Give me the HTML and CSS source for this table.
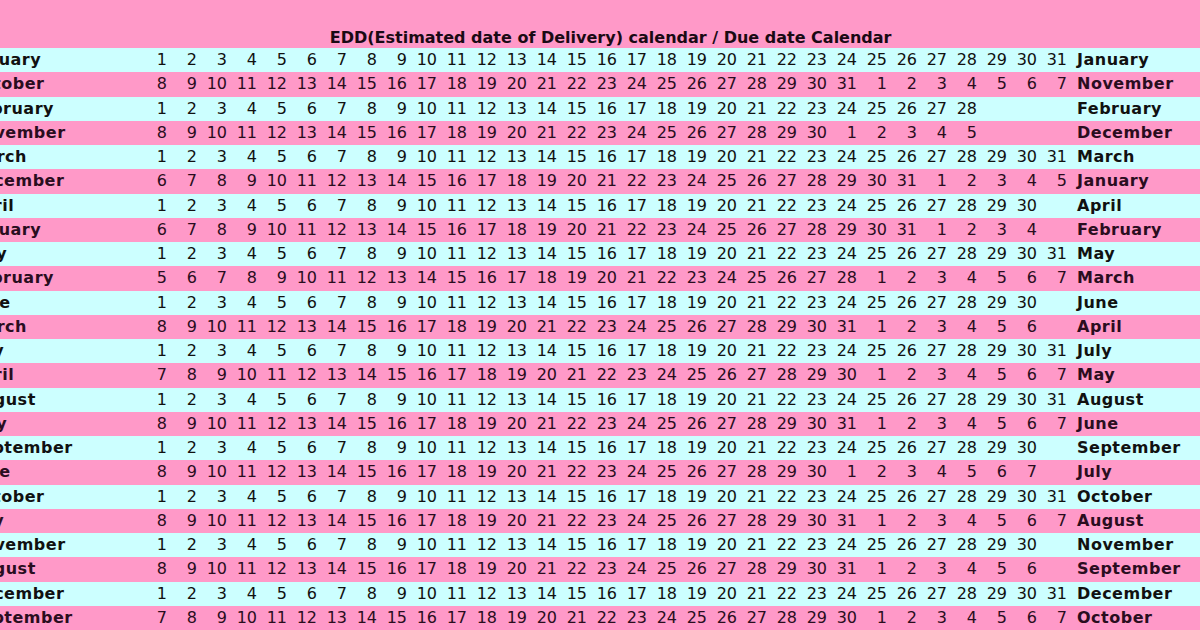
FILE: index.html
```html
<!DOCTYPE html>
<html>
<head>
<meta charset="utf-8">
<title>EDD calendar</title>
<link rel="stylesheet" href="styles.css">
</head>
<body>
<table class="edd">
<colgroup><col class="cm"><col span="31" class="cn"><col class="cr"></colgroup>
<tr class="head"><td colspan="33" class="title">EDD(Estimated date of Delivery) calendar / Due date Calendar</td></tr>
<tr class="c"><td class="m">January</td><td>1</td><td>2</td><td>3</td><td>4</td><td>5</td><td>6</td><td>7</td><td>8</td><td>9</td><td>10</td><td>11</td><td>12</td><td>13</td><td>14</td><td>15</td><td>16</td><td>17</td><td>18</td><td>19</td><td>20</td><td>21</td><td>22</td><td>23</td><td>24</td><td>25</td><td>26</td><td>27</td><td>28</td><td>29</td><td>30</td><td>31</td><td class="r">January</td></tr>
<tr class="p"><td class="m">October</td><td>8</td><td>9</td><td>10</td><td>11</td><td>12</td><td>13</td><td>14</td><td>15</td><td>16</td><td>17</td><td>18</td><td>19</td><td>20</td><td>21</td><td>22</td><td>23</td><td>24</td><td>25</td><td>26</td><td>27</td><td>28</td><td>29</td><td>30</td><td>31</td><td>1</td><td>2</td><td>3</td><td>4</td><td>5</td><td>6</td><td>7</td><td class="r">November</td></tr>
<tr class="c"><td class="m">February</td><td>1</td><td>2</td><td>3</td><td>4</td><td>5</td><td>6</td><td>7</td><td>8</td><td>9</td><td>10</td><td>11</td><td>12</td><td>13</td><td>14</td><td>15</td><td>16</td><td>17</td><td>18</td><td>19</td><td>20</td><td>21</td><td>22</td><td>23</td><td>24</td><td>25</td><td>26</td><td>27</td><td>28</td><td></td><td></td><td></td><td class="r">February</td></tr>
<tr class="p"><td class="m">November</td><td>8</td><td>9</td><td>10</td><td>11</td><td>12</td><td>13</td><td>14</td><td>15</td><td>16</td><td>17</td><td>18</td><td>19</td><td>20</td><td>21</td><td>22</td><td>23</td><td>24</td><td>25</td><td>26</td><td>27</td><td>28</td><td>29</td><td>30</td><td>1</td><td>2</td><td>3</td><td>4</td><td>5</td><td></td><td></td><td></td><td class="r">December</td></tr>
<tr class="c"><td class="m">March</td><td>1</td><td>2</td><td>3</td><td>4</td><td>5</td><td>6</td><td>7</td><td>8</td><td>9</td><td>10</td><td>11</td><td>12</td><td>13</td><td>14</td><td>15</td><td>16</td><td>17</td><td>18</td><td>19</td><td>20</td><td>21</td><td>22</td><td>23</td><td>24</td><td>25</td><td>26</td><td>27</td><td>28</td><td>29</td><td>30</td><td>31</td><td class="r">March</td></tr>
<tr class="p"><td class="m">December</td><td>6</td><td>7</td><td>8</td><td>9</td><td>10</td><td>11</td><td>12</td><td>13</td><td>14</td><td>15</td><td>16</td><td>17</td><td>18</td><td>19</td><td>20</td><td>21</td><td>22</td><td>23</td><td>24</td><td>25</td><td>26</td><td>27</td><td>28</td><td>29</td><td>30</td><td>31</td><td>1</td><td>2</td><td>3</td><td>4</td><td>5</td><td class="r">January</td></tr>
<tr class="c"><td class="m">April</td><td>1</td><td>2</td><td>3</td><td>4</td><td>5</td><td>6</td><td>7</td><td>8</td><td>9</td><td>10</td><td>11</td><td>12</td><td>13</td><td>14</td><td>15</td><td>16</td><td>17</td><td>18</td><td>19</td><td>20</td><td>21</td><td>22</td><td>23</td><td>24</td><td>25</td><td>26</td><td>27</td><td>28</td><td>29</td><td>30</td><td></td><td class="r">April</td></tr>
<tr class="p"><td class="m">January</td><td>6</td><td>7</td><td>8</td><td>9</td><td>10</td><td>11</td><td>12</td><td>13</td><td>14</td><td>15</td><td>16</td><td>17</td><td>18</td><td>19</td><td>20</td><td>21</td><td>22</td><td>23</td><td>24</td><td>25</td><td>26</td><td>27</td><td>28</td><td>29</td><td>30</td><td>31</td><td>1</td><td>2</td><td>3</td><td>4</td><td></td><td class="r">February</td></tr>
<tr class="c"><td class="m">May</td><td>1</td><td>2</td><td>3</td><td>4</td><td>5</td><td>6</td><td>7</td><td>8</td><td>9</td><td>10</td><td>11</td><td>12</td><td>13</td><td>14</td><td>15</td><td>16</td><td>17</td><td>18</td><td>19</td><td>20</td><td>21</td><td>22</td><td>23</td><td>24</td><td>25</td><td>26</td><td>27</td><td>28</td><td>29</td><td>30</td><td>31</td><td class="r">May</td></tr>
<tr class="p"><td class="m">February</td><td>5</td><td>6</td><td>7</td><td>8</td><td>9</td><td>10</td><td>11</td><td>12</td><td>13</td><td>14</td><td>15</td><td>16</td><td>17</td><td>18</td><td>19</td><td>20</td><td>21</td><td>22</td><td>23</td><td>24</td><td>25</td><td>26</td><td>27</td><td>28</td><td>1</td><td>2</td><td>3</td><td>4</td><td>5</td><td>6</td><td>7</td><td class="r">March</td></tr>
<tr class="c"><td class="m">June</td><td>1</td><td>2</td><td>3</td><td>4</td><td>5</td><td>6</td><td>7</td><td>8</td><td>9</td><td>10</td><td>11</td><td>12</td><td>13</td><td>14</td><td>15</td><td>16</td><td>17</td><td>18</td><td>19</td><td>20</td><td>21</td><td>22</td><td>23</td><td>24</td><td>25</td><td>26</td><td>27</td><td>28</td><td>29</td><td>30</td><td></td><td class="r">June</td></tr>
<tr class="p"><td class="m">March</td><td>8</td><td>9</td><td>10</td><td>11</td><td>12</td><td>13</td><td>14</td><td>15</td><td>16</td><td>17</td><td>18</td><td>19</td><td>20</td><td>21</td><td>22</td><td>23</td><td>24</td><td>25</td><td>26</td><td>27</td><td>28</td><td>29</td><td>30</td><td>31</td><td>1</td><td>2</td><td>3</td><td>4</td><td>5</td><td>6</td><td></td><td class="r">April</td></tr>
<tr class="c"><td class="m">July</td><td>1</td><td>2</td><td>3</td><td>4</td><td>5</td><td>6</td><td>7</td><td>8</td><td>9</td><td>10</td><td>11</td><td>12</td><td>13</td><td>14</td><td>15</td><td>16</td><td>17</td><td>18</td><td>19</td><td>20</td><td>21</td><td>22</td><td>23</td><td>24</td><td>25</td><td>26</td><td>27</td><td>28</td><td>29</td><td>30</td><td>31</td><td class="r">July</td></tr>
<tr class="p"><td class="m">April</td><td>7</td><td>8</td><td>9</td><td>10</td><td>11</td><td>12</td><td>13</td><td>14</td><td>15</td><td>16</td><td>17</td><td>18</td><td>19</td><td>20</td><td>21</td><td>22</td><td>23</td><td>24</td><td>25</td><td>26</td><td>27</td><td>28</td><td>29</td><td>30</td><td>1</td><td>2</td><td>3</td><td>4</td><td>5</td><td>6</td><td>7</td><td class="r">May</td></tr>
<tr class="c"><td class="m">August</td><td>1</td><td>2</td><td>3</td><td>4</td><td>5</td><td>6</td><td>7</td><td>8</td><td>9</td><td>10</td><td>11</td><td>12</td><td>13</td><td>14</td><td>15</td><td>16</td><td>17</td><td>18</td><td>19</td><td>20</td><td>21</td><td>22</td><td>23</td><td>24</td><td>25</td><td>26</td><td>27</td><td>28</td><td>29</td><td>30</td><td>31</td><td class="r">August</td></tr>
<tr class="p"><td class="m">May</td><td>8</td><td>9</td><td>10</td><td>11</td><td>12</td><td>13</td><td>14</td><td>15</td><td>16</td><td>17</td><td>18</td><td>19</td><td>20</td><td>21</td><td>22</td><td>23</td><td>24</td><td>25</td><td>26</td><td>27</td><td>28</td><td>29</td><td>30</td><td>31</td><td>1</td><td>2</td><td>3</td><td>4</td><td>5</td><td>6</td><td>7</td><td class="r">June</td></tr>
<tr class="c"><td class="m">September</td><td>1</td><td>2</td><td>3</td><td>4</td><td>5</td><td>6</td><td>7</td><td>8</td><td>9</td><td>10</td><td>11</td><td>12</td><td>13</td><td>14</td><td>15</td><td>16</td><td>17</td><td>18</td><td>19</td><td>20</td><td>21</td><td>22</td><td>23</td><td>24</td><td>25</td><td>26</td><td>27</td><td>28</td><td>29</td><td>30</td><td></td><td class="r">September</td></tr>
<tr class="p"><td class="m">June</td><td>8</td><td>9</td><td>10</td><td>11</td><td>12</td><td>13</td><td>14</td><td>15</td><td>16</td><td>17</td><td>18</td><td>19</td><td>20</td><td>21</td><td>22</td><td>23</td><td>24</td><td>25</td><td>26</td><td>27</td><td>28</td><td>29</td><td>30</td><td>1</td><td>2</td><td>3</td><td>4</td><td>5</td><td>6</td><td>7</td><td></td><td class="r">July</td></tr>
<tr class="c"><td class="m">October</td><td>1</td><td>2</td><td>3</td><td>4</td><td>5</td><td>6</td><td>7</td><td>8</td><td>9</td><td>10</td><td>11</td><td>12</td><td>13</td><td>14</td><td>15</td><td>16</td><td>17</td><td>18</td><td>19</td><td>20</td><td>21</td><td>22</td><td>23</td><td>24</td><td>25</td><td>26</td><td>27</td><td>28</td><td>29</td><td>30</td><td>31</td><td class="r">October</td></tr>
<tr class="p"><td class="m">July</td><td>8</td><td>9</td><td>10</td><td>11</td><td>12</td><td>13</td><td>14</td><td>15</td><td>16</td><td>17</td><td>18</td><td>19</td><td>20</td><td>21</td><td>22</td><td>23</td><td>24</td><td>25</td><td>26</td><td>27</td><td>28</td><td>29</td><td>30</td><td>31</td><td>1</td><td>2</td><td>3</td><td>4</td><td>5</td><td>6</td><td>7</td><td class="r">August</td></tr>
<tr class="c"><td class="m">November</td><td>1</td><td>2</td><td>3</td><td>4</td><td>5</td><td>6</td><td>7</td><td>8</td><td>9</td><td>10</td><td>11</td><td>12</td><td>13</td><td>14</td><td>15</td><td>16</td><td>17</td><td>18</td><td>19</td><td>20</td><td>21</td><td>22</td><td>23</td><td>24</td><td>25</td><td>26</td><td>27</td><td>28</td><td>29</td><td>30</td><td></td><td class="r">November</td></tr>
<tr class="p"><td class="m">August</td><td>8</td><td>9</td><td>10</td><td>11</td><td>12</td><td>13</td><td>14</td><td>15</td><td>16</td><td>17</td><td>18</td><td>19</td><td>20</td><td>21</td><td>22</td><td>23</td><td>24</td><td>25</td><td>26</td><td>27</td><td>28</td><td>29</td><td>30</td><td>31</td><td>1</td><td>2</td><td>3</td><td>4</td><td>5</td><td>6</td><td></td><td class="r">September</td></tr>
<tr class="c"><td class="m">December</td><td>1</td><td>2</td><td>3</td><td>4</td><td>5</td><td>6</td><td>7</td><td>8</td><td>9</td><td>10</td><td>11</td><td>12</td><td>13</td><td>14</td><td>15</td><td>16</td><td>17</td><td>18</td><td>19</td><td>20</td><td>21</td><td>22</td><td>23</td><td>24</td><td>25</td><td>26</td><td>27</td><td>28</td><td>29</td><td>30</td><td>31</td><td class="r">December</td></tr>
<tr class="p"><td class="m">September</td><td>7</td><td>8</td><td>9</td><td>10</td><td>11</td><td>12</td><td>13</td><td>14</td><td>15</td><td>16</td><td>17</td><td>18</td><td>19</td><td>20</td><td>21</td><td>22</td><td>23</td><td>24</td><td>25</td><td>26</td><td>27</td><td>28</td><td>29</td><td>30</td><td>1</td><td>2</td><td>3</td><td>4</td><td>5</td><td>6</td><td>7</td><td class="r">October</td></tr>
</table>
</body>
</html>
```

FILE: styles.css
```css
html, body {
  margin: 0;
  padding: 0;
  overflow: hidden;
  background: #ff99c8;
}

.edd {
  margin-left: -37px;
  width: 1295px;
  table-layout: fixed;
  border-collapse: collapse;
  font-family: "DejaVu Sans", Verdana, sans-serif;
  font-size: 16px;
}

.cm { width: 177px; }
.cn { width: 30px; }
.cr { width: 188px; }

.edd td {
  padding: 0 3px 0 0;
  height: 24.25px;
  text-align: right;
  vertical-align: middle;
  white-space: nowrap;
  line-height: 18px;
}

.edd tr.head td.title {
  height: 47px;
  padding: 0 0 1px 0;
  vertical-align: bottom;
  text-align: center;
  font-weight: bold;
  color: #1a0a14;
  background: #ff99c8;
}

.edd tr.c td {
  background: #ccffff;
  color: #111111;
}

.edd tr.p td {
  background: #ff99c8;
  color: #2a0d20;
}

.edd td.m,
.edd td.r {
  font-weight: bold;
  text-align: left;
  letter-spacing: 0.5px;
}

.edd td.m { padding-left: 6px; }
.edd td.r { padding-left: 7px; }
```
